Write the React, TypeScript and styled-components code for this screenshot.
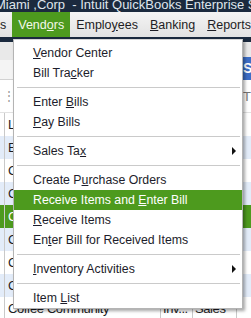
import React from "react";
import styled, { createGlobalStyle } from "styled-components";

type Entry = { label: string; submenu?: boolean; active?: boolean } | "sep";

const menu: Entry[] = [
  { label: "&Vendor Center" },
  { label: "Bill Tra&cker" },
  "sep",
  { label: "Enter &Bills" },
  { label: "&Pay Bills" },
  "sep",
  { label: "Sales Ta&x", submenu: true },
  "sep",
  { label: "Create P&urchase Orders" },
  { label: "Receive Items and &Enter Bill", active: true },
  { label: "&Receive Items" },
  { label: "En&ter Bill for Received Items" },
  "sep",
  { label: "&Inventory Activities", submenu: true },
  "sep",
  { label: "Item &List" },
];

const tabs = [
  { label: "s", first: true },
  { label: "Vend&ors", active: true },
  { label: "Emplo&yees" },
  { label: "&Banking" },
  { label: "&Reports" },
];

const rows = [
  { name: "Lumber Yard", type: "Ven...", acct: "Cost" },
  { name: "East Bayshore Auto", type: "Ven...", acct: "Cost" },
  { name: "C.U. Electric", type: "Ven...", acct: "Cost" },
  { name: "Cal Gas & Electric", type: "Ven...", acct: "Utilit" },
  { name: "Cal Telephone", type: "Ven...", acct: "Utilit", selected: true },
  { name: "City of Bayshore", type: "Ven...", acct: "Taxes" },
  { name: "Clear Lake Supply", type: "Inv...", acct: "Sales" },
  { name: "Coffee Beans Co", type: "Inv...", acct: "Sales" },
  { name: "Coffee Community", type: "Inv...", acct: "Sales" },
];

// "&" marks the mnemonic letter
const Mnemonic = ({ text }: { text: string }) => {
  const i = text.indexOf("&");
  if (i < 0) return <span>{text}</span>;
  return (
    <span>
      {text.slice(0, i)}
      <u>{text[i + 1]}</u>
      {text.slice(i + 2)}
    </span>
  );
};

const App = () => (
  <>
    <GlobalStyle />
    <Window>
      <TitleBar>
        <TitleText>Miami ,Corp&nbsp; - Intuit QuickBooks Enterprise Solutions</TitleText>
      </TitleBar>
      <MenuBar>
        {tabs.map((t) => (
          <MenuTab key={t.label} $active={!!t.active} $first={!!t.first}>
            <Mnemonic text={t.label} />
          </MenuTab>
        ))}
      </MenuBar>
      <Band />
      <TopPanel>
        <BlueButton>S</BlueButton>
      </TopPanel>
      <HeaderRow>
        <Grip>⋮</Grip>
        <HeaderLabel>T</HeaderLabel>
      </HeaderRow>
      <List>
        {rows.map((r, i) => (
          <Row key={i} $tone={r.selected ? "sel" : i % 2 ? "blue" : "white"}>
            <Cell $w={5} />
            <NameCell>{r.name}</NameCell>
            <Cell $w={32}>{r.type}</Cell>
            <Cell $w={44}>{r.acct}</Cell>
            <Cell $w={20} />
          </Row>
        ))}
      </List>

      <Dropdown>
        {menu.map((m, i) =>
          m === "sep" ? (
            <Separator key={i} />
          ) : (
            <Item key={i} $active={!!m.active}>
              <Mnemonic text={m.label} />
              {m.submenu && <Arrow />}
            </Item>
          )
        )}
      </Dropdown>
    </Window>
  </>
);

const GlobalStyle = createGlobalStyle`
  html, body {
    margin: 0;
    padding: 0;
    overflow: hidden;
    background: #fff;
  }
  body {
    font-family: "Liberation Sans", Arial, sans-serif;
  }
`;

const Window = styled.div`
  position: relative;
  width: 251px;
  height: 318px;
  overflow: hidden;
  background: #fff;
`;

const TitleBar = styled.div`
  height: 12px;
  background: #1b2a3e;
  overflow: hidden;
`;

const TitleText = styled.div`
  margin: -2px 0 0 -5px;
  font-size: 13px;
  line-height: 13px;
  color: #dfe5ec;
  white-space: nowrap;
`;

const MenuBar = styled.div`
  display: flex;
  height: 25px;
  background: linear-gradient(#f4f4f4, #e2e2e2);
  white-space: nowrap;
`;

const MenuTab = styled.div<{ $active: boolean; $first: boolean }>`
  display: flex;
  align-items: center;
  padding: 1px 6px 0 ${(p) => (p.$first ? "0" : "6px")};
  font-size: 12.5px;
  color: ${(p) => (p.$active ? "#f4f8ea" : "#1d1d24")};
  background: ${(p) => (p.$active ? "#4d9a1e" : "transparent")};
  ${(p) => p.$first && "width: 7px;"}
`;

const Band = styled.div`
  height: 5px;
  background: #1b2a3e;
`;

const TopPanel = styled.div`
  display: flex;
  justify-content: flex-end;
  height: 38px;
  padding-top: 15px;
  box-sizing: border-box;
  background: linear-gradient(#e9e9e9 0 18px, #f4f4f4 18px);
  border-bottom: 1px solid #d2d2d2;
`;

const BlueButton = styled.div`
  width: 8px;
  height: 23px;
  padding-left: 3px;
  background: #3d6ec6;
  color: #fff;
  font-size: 14px;
  font-weight: bold;
  line-height: 23px;
  overflow: hidden;
`;

const HeaderRow = styled.div`
  display: flex;
  align-items: center;
  justify-content: space-between;
  height: 32px;
  padding: 0 0 0 3px;
  border-bottom: 1px solid #e2e2e2;
  font-size: 13px;
  color: #777;
`;

const Grip = styled.span`
  font-size: 12px;
  color: #999;
`;

const HeaderLabel = styled.span`
  width: 8px;
  overflow: hidden;
`;

const List = styled.div`
  display: flex;
  flex-direction: column;
`;

const toneBg = { white: "#ffffff", blue: "#e3ecf9", sel: "#4d9a1e" };

const Row = styled.div<{ $tone: "white" | "blue" | "sel" }>`
  display: flex;
  height: 23px;
  flex-shrink: 0;
  background: ${(p) => toneBg[p.$tone]};
  color: ${(p) => (p.$tone === "sel" ? "#fff" : "#1d1d24")};
  font-size: 13px;
  letter-spacing: -0.4px;
  white-space: nowrap;
`;

const Cell = styled.div<{ $w: number }>`
  width: ${(p) => p.$w}px;
  flex-shrink: 0;
  padding-left: 2px;
  box-sizing: border-box;
  overflow: hidden;
  line-height: 23px;
  border-right: 1px solid #c9c9c9;
`;

const NameCell = styled(Cell).attrs({ $w: 156 })`
  padding-left: 3px;
`;

const Dropdown = styled.div`
  position: absolute;
  left: 13px;
  top: 39px;
  width: 228px;
  padding: 3px 0 0;
  background: #fff;
  border: 1px solid #b4b4b4;
  border-top-color: #d6d6d6;
  box-shadow: 2px 2px 3px rgba(0, 0, 0, 0.35);
`;

const Item = styled.div<{ $active: boolean }>`
  position: relative;
  height: 20px;
  padding-left: 19px;
  display: flex;
  align-items: center;
  font-size: 12.3px;
  white-space: nowrap;
  color: ${(p) => (p.$active ? "#ffffff" : "#1d1d2b")};
  background: ${(p) => (p.$active ? "#4d9a1e" : "transparent")};
`;

const Arrow = styled.span`
  position: absolute;
  right: 6px;
  top: 6px;
  border-left: 4px solid #111;
  border-top: 4px solid transparent;
  border-bottom: 4px solid transparent;
`;

const Separator = styled.div`
  height: 9px;
  margin: 0 2px 0 3px;
  background: linear-gradient(#cacaca, #cacaca) 0 4px / 100% 1px no-repeat;
`;

export default App;
